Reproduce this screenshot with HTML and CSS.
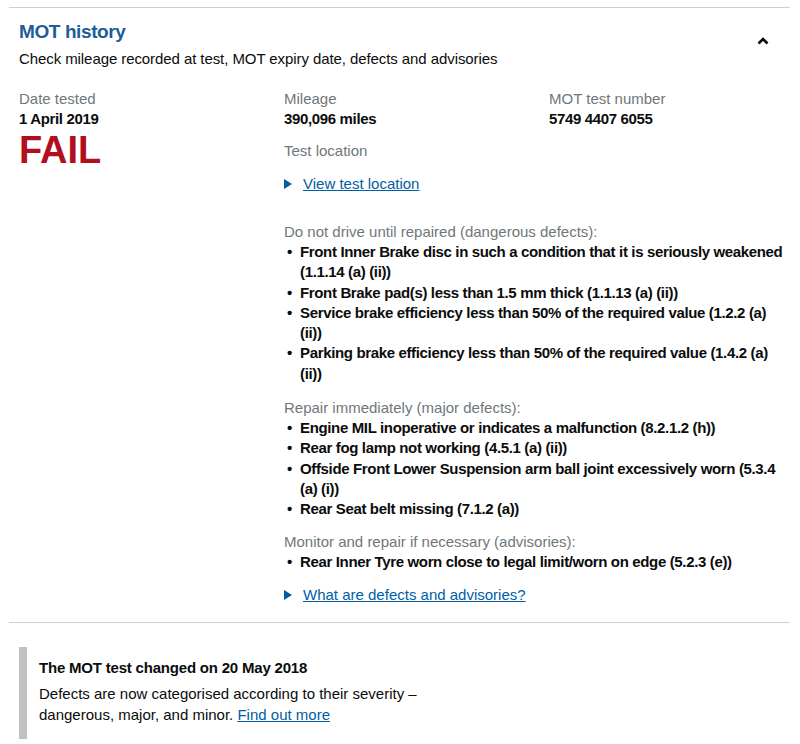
FILE: index.html
```html
<!DOCTYPE html>
<html lang="en">

<head>
  <meta charset="UTF-8">
  <meta name="viewport" content="width=device-width, initial-scale=1.0">
  <title>MOT history</title>
  <link rel="stylesheet" href="styles.css">
</head>

<body>
  <section class="accordion">
    <div class="accordion-header">
      <div>
        <h2 class="accordion-title">MOT history</h2>
        <p class="accordion-summary">Check mileage recorded at test, MOT expiry date, defects and advisories</p>
      </div>
      <svg class="chevron" width="12" height="8" viewBox="0 0 12 8">
        <path d="M1.5 6.5 L6 2 L10.5 6.5" fill="none" stroke="#0b0c0c" stroke-width="2.6" />
      </svg>
    </div>

    <div class="test-row">
      <div class="test-col">
        <div class="label">Date tested</div>
        <div class="value">1 April 2019</div>
        <div class="result-fail">FAIL</div>
      </div>

      <div class="test-detail">
        <div class="detail-top">
          <div>
            <div class="label">Mileage</div>
            <div class="value">390,096 miles</div>
          </div>
          <div>
            <div class="label">MOT test number</div>
            <div class="value">5749 4407 6055</div>
          </div>
        </div>

        <div class="label location-label">Test location</div>
        <a class="details-link" href="#"><span class="arrow"></span><span class="link-text">View test location</span></a>

        <div class="defect-group first-group">
          <div class="label">Do not drive until repaired (dangerous defects):</div>
          <ul class="defect-list">
            <li>Front Inner Brake disc in such a condition that it is seriously weakened (1.1.14 (a) (ii))</li>
            <li>Front Brake pad(s) less than 1.5 mm thick (1.1.13 (a) (ii))</li>
            <li>Service brake efficiency less than 50% of the required value (1.2.2 (a) (ii))</li>
            <li>Parking brake efficiency less than 50% of the required value (1.4.2 (a) (ii))</li>
          </ul>
        </div>

        <div class="defect-group major-group">
          <div class="label">Repair immediately (major defects):</div>
          <ul class="defect-list">
            <li>Engine MIL inoperative or indicates a malfunction (8.2.1.2 (h))</li>
            <li>Rear fog lamp not working (4.5.1 (a) (ii))</li>
            <li>Offside Front Lower Suspension arm ball joint excessively worn (5.3.4 (a) (i))</li>
            <li>Rear Seat belt missing (7.1.2 (a))</li>
          </ul>
        </div>

        <div class="defect-group">
          <div class="label">Monitor and repair if necessary (advisories):</div>
          <ul class="defect-list">
            <li>Rear Inner Tyre worn close to legal limit/worn on edge (5.2.3 (e))</li>
          </ul>
        </div>

        <a class="details-link defects-link" href="#"><span class="arrow"></span><span class="link-text">What are defects and advisories?</span></a>
      </div>
    </div>
  </section>

  <div class="inset">
    <h3 class="inset-title">The MOT test changed on 20 May 2018</h3>
    <p class="inset-text">Defects are now categorised according to their severity –<br>dangerous, major, and minor. <a href="#">Find out more</a></p>
  </div>
</body>

</html>
```

FILE: styles.css
```css
* {
  margin: 0;
  padding: 0;
  box-sizing: border-box;
}

body {
  font-family: "Liberation Sans", Arial, sans-serif;
  font-size: 15px;
  line-height: 20px;
  color: #0b0c0c;
  background: #fff;
  padding-top: 7px;
}

a {
  color: #005ea5;
}

.accordion {
  margin-left: 9px;
  margin-right: 10px;
  border-top: 1px solid #cfd0d1;
  border-bottom: 1px solid #cfd0d1;
  padding: 0 0 17px 10px;
}

.accordion-header {
  display: flex;
  justify-content: space-between;
  padding-top: 11px;
}

.accordion-title {
  font-size: 19px;
  line-height: 25px;
  letter-spacing: -0.4px;
  color: #1d5d97;
}

.accordion-summary {
  margin-top: 5px;
  letter-spacing: -0.08px;
}

.chevron {
  margin: 18px 21px 0 0;
}

.test-row {
  display: grid;
  grid-template-columns: 265px 1fr;
  margin-top: 20px;
}

.label {
  color: #6f777b;
}

.value {
  font-weight: bold;
  letter-spacing: -0.35px;
}

.result-fail {
  font-size: 38px;
  line-height: 38px;
  font-weight: bold;
  color: #b10e1e;
  margin-top: 2px;
}

.detail-top {
  display: grid;
  grid-template-columns: 265px 1fr;
}

.location-label {
  margin-top: 12px;
}

.details-link {
  display: flex;
  align-items: center;
  margin-top: 13px;
}

.arrow {
  width: 0;
  height: 0;
  border-top: 5px solid transparent;
  border-bottom: 5px solid transparent;
  border-left: 8px solid #005ea5;
  margin-right: 11px;
}

.defect-group {
  margin-top: 12px;
}

.first-group {
  margin-top: 28px;
}

.major-group {
  margin-top: 14px;
}

.defect-list {
  list-style: none;
  font-weight: bold;
  line-height: 20.3px;
  letter-spacing: -0.35px;
}

.defect-list li {
  position: relative;
  padding-left: 16px;
}

.defect-list li::before {
  content: "•";
  position: absolute;
  left: 3px;
}

.defects-link {
  margin-top: 13px;
}

.inset {
  margin: 24px 0 0 19px;
  border-left: 8px solid #bfc1c3;
  padding: 11px 0 14px 12px;
  max-width: 460px;
}

.inset-title {
  font-size: 15px;
  line-height: 20px;
  letter-spacing: -0.2px;
}

.inset-text {
  margin-top: 5px;
  line-height: 21px;
}
```
